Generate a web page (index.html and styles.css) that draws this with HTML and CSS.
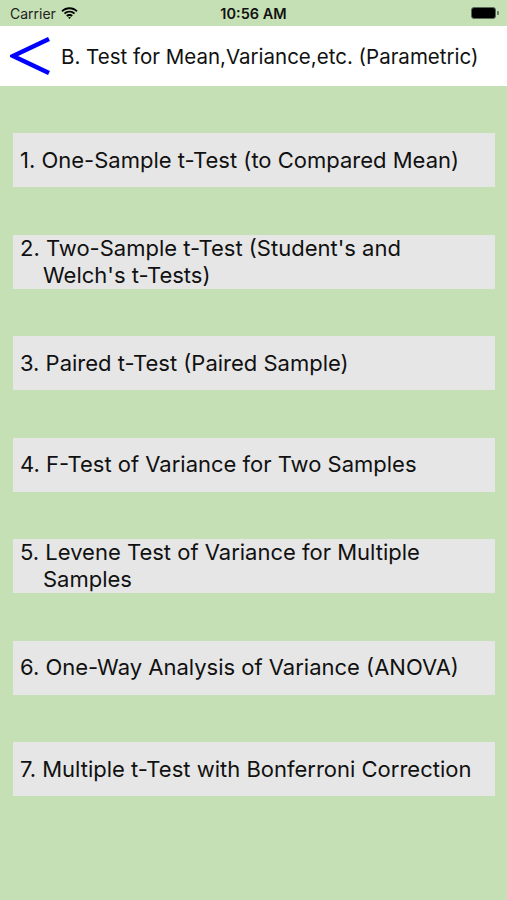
FILE: index.html
```html
<!DOCTYPE html>
<html>
<head>
<meta charset="utf-8">
<link rel="stylesheet" href="styles.css">
</head>
<body>
<div class="status">
  <div class="carrier">Carrier
    <svg class="wifi" width="17" height="12" viewBox="0 0 17 12"><path d="M8.5 2.2c2.6 0 5 1 6.8 2.7l1.3-1.4C14.4 1.4 11.6.2 8.5.2S2.6 1.4.4 3.5l1.3 1.4C3.5 3.2 5.9 2.2 8.5 2.2z" fill="#000"/><path d="M8.5 5.6c1.6 0 3.1.6 4.3 1.7l1.3-1.4C12.6 4.5 10.6 3.7 8.5 3.7S4.4 4.5 2.9 5.9l1.3 1.4C5.4 6.2 6.9 5.6 8.5 5.6z" fill="#000"/><path d="M8.5 9c.7 0 1.4.3 1.9.8l1.4-1.4C10.9 7.6 9.8 7.1 8.5 7.1S6.1 7.6 5.2 8.4l1.4 1.4c.5-.5 1.2-.8 1.9-.8zM8.5 12l1.4-1.4c-.4-.4-.9-.6-1.4-.6s-1 .2-1.4.6z" fill="#000"/></svg>
  </div>
  <div class="time">10:56 AM</div>
  <div class="battery"><span class="cell"></span><span class="tip"></span></div>
</div>
<header class="nav">
  <svg class="back" width="40" height="38" viewBox="0 0 40 38"><polyline points="39,2 3,19 39,36" fill="none" stroke="#0000ff" stroke-width="4.5"/></svg>
  <div class="title">B. Test for Mean,Variance,etc. (Parametric)</div>
</header>
<main class="list">
  <div class="item"><p>1. One-Sample t-Test (to Compared Mean)</p></div>
  <div class="item"><p>2. Two-Sample t-Test (Student's and Welch's t-Tests)</p></div>
  <div class="item"><p>3. Paired t-Test (Paired Sample)</p></div>
  <div class="item"><p>4. F-Test of Variance for Two Samples</p></div>
  <div class="item"><p>5. Levene Test of Variance for Multiple Samples</p></div>
  <div class="item"><p>6. One-Way Analysis of Variance (ANOVA)</p></div>
  <div class="item"><p>7. Multiple t-Test with Bonferroni Correction</p></div>
</main>
</body>
</html>
```
FILE: styles.css
```css
html, body {
  margin: 0;
  padding: 0;
}
body {
  background: #c5e0b4;
  width: 507px;
  height: 900px;
  font-family: Inter, "Liberation Sans", Arial, sans-serif;
  color: #111;
  overflow: hidden;
}
.status {
  height: 26px;
  display: flex;
  align-items: center;
  justify-content: space-between;
  padding: 0 8px 0 10px;
  box-sizing: border-box;
  position: relative;
  font-size: 14px;
}
.carrier {
  display: flex;
  align-items: center;
  gap: 5px;
  color: #222;
}
.time {
  position: absolute;
  left: 0;
  right: 0;
  text-align: center;
  font-weight: 600;
  font-size: 14.5px;
  color: #111;
}
.battery {
  display: flex;
  align-items: center;
  margin-left: auto;
}
.cell {
  width: 23px;
  height: 10px;
  background: #000;
  border-radius: 3px;
  border: 1.5px solid #5a6a55;
}
.tip {
  width: 2px;
  height: 4px;
  background: #6a7a66;
  margin-left: 1px;
  border-radius: 0 1px 1px 0;
}
.nav {
  background: #fff;
  height: 60px;
  display: flex;
  align-items: center;
  padding-left: 10px;
  gap: 11px;
}
.back {
  display: block;
}
.title {
  font-size: 20.5px;
  color: #111;
}
.list {
  display: flex;
  flex-direction: column;
  gap: 47.5px;
  padding: 47px 12px 0 13px;
}
.item {
  background: #e6e6e6;
  height: 54px;
  display: flex;
  align-items: center;
  padding: 0 18px 0 7px;
}
.item p {
  margin: 0;
  font-size: 22px;
  line-height: 27px;
  padding-left: 23px;
  text-indent: -23px;
  color: #111;
}
```
